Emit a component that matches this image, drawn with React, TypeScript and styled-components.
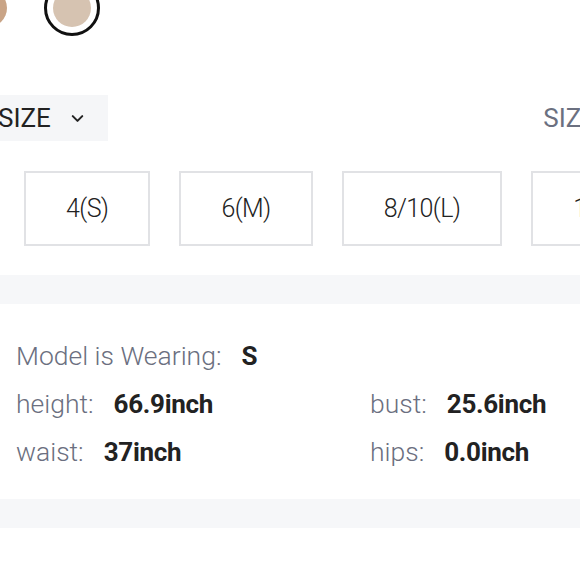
import styled, { createGlobalStyle } from 'styled-components';

const GlobalStyle = createGlobalStyle`
  html, body {
    margin: 0;
    padding: 0;
    background: #fff;
    overflow: hidden;
  }
  body {
    font-family: Roboto, "Noto Sans", Arial, sans-serif;
    color: #222;
  }
`;

const Page = styled.div`
  width: 580px;
  height: 580px;
  overflow: hidden;
`;

const SwatchRow = styled.div`
  display: flex;
  gap: 28px;
  margin: -20px 0 0 -40px;
`;

const Swatch = styled.div<{ $selected?: boolean; $color: string }>`
  width: 56px;
  height: 56px;
  box-sizing: border-box;
  border-radius: 50%;
  border: 3px solid ${(p) => (p.$selected ? '#111' : 'transparent')};
  display: flex;
  align-items: center;
  justify-content: center;
  flex-shrink: 0;

  &::after {
    content: '';
    width: 38px;
    height: 38px;
    border-radius: 50%;
    background: ${(p) => p.$color};
  }
`;

const SizeHeader = styled.div`
  display: flex;
  align-items: center;
  justify-content: space-between;
  margin-top: 59px;
`;

const Dropdown = styled.div`
  display: flex;
  align-items: center;
  gap: 17px;
  width: 110px;
  height: 46px;
  box-sizing: border-box;
  background: #f5f6f8;
  font-size: 26px;
  color: #222;
  margin-left: -2px;
  flex-shrink: 0;

  svg {
    width: 19px;
    height: 19px;
  }
`;

const SideLabel = styled.span`
  font-size: 26px;
  color: #6b7080;
  margin-right: -96px;
  flex-shrink: 0;
  white-space: nowrap;
`;

const SizeList = styled.div`
  display: flex;
  gap: 29px;
  padding-left: 24px;
  margin-top: 30px;
`;

const SizeButton = styled.button`
  flex-shrink: 0;
  height: 75px;
  padding: 0 40px;
  background: #fff;
  border: 2px solid #e1e2e5;
  font-family: Roboto, "Noto Sans", Arial, sans-serif;
  font-size: 25px;
  font-weight: 300;
  letter-spacing: -0.6px;
  color: #222;
`;

const Band = styled.div`
  height: 29px;
  background: #f6f7f9;
  margin-top: 29px;
`;

const Info = styled.div`
  display: grid;
  grid-template-columns: 354px 1fr;
  grid-auto-rows: 48px;
  padding: 28px 16px 23px;
`;

const InfoItem = styled.div<{ $wide?: boolean }>`
  grid-column: ${(p) => (p.$wide ? '1 / -1' : 'auto')};
  display: flex;
  align-items: baseline;
  line-height: 48px;
  font-size: 26.5px;
  white-space: nowrap;
`;

const Label = styled.span`
  color: #6b6f80;
  font-weight: 300;
  margin-right: 20px;
`;

const Value = styled.span`
  color: #222;
  font-weight: 700;
  font-size: 26px;
  letter-spacing: -0.3px;
`;

const BottomBand = styled(Band)`
  margin-top: 0;
`;

const sizes = ['4(S)', '6(M)', '8/10(L)', '12(XL)'];

const measures = [
  { label: 'height:', value: '66.9inch' },
  { label: 'bust:', value: '25.6inch' },
  { label: 'waist:', value: '37inch' },
  { label: 'hips:', value: '0.0inch' },
];

export default function App(): JSX.Element {
  return (
    <Page>
      <GlobalStyle />
      <SwatchRow>
        <Swatch $color="#c9a486" />
        <Swatch $selected $color="#d6c3b1" />
      </SwatchRow>

      <SizeHeader>
        <Dropdown>
          <span>SIZE</span>
          <svg viewBox="0 0 24 24" fill="none" stroke="#222" strokeWidth="2.6" strokeLinecap="round" strokeLinejoin="round">
            <path d="M6 9l6 6 6-6" />
          </svg>
        </Dropdown>
        <SideLabel>SIZE GUIDE</SideLabel>
      </SizeHeader>

      <SizeList>
        {sizes.map((s) => (
          <SizeButton key={s}>{s}</SizeButton>
        ))}
      </SizeList>

      <Band />

      <Info>
        <InfoItem $wide>
          <Label>Model is Wearing:</Label>
          <Value>S</Value>
        </InfoItem>
        {measures.map((m) => (
          <InfoItem key={m.label}>
            <Label>{m.label}</Label>
            <Value>{m.value}</Value>
          </InfoItem>
        ))}
      </Info>

      <BottomBand />
    </Page>
  );
}
